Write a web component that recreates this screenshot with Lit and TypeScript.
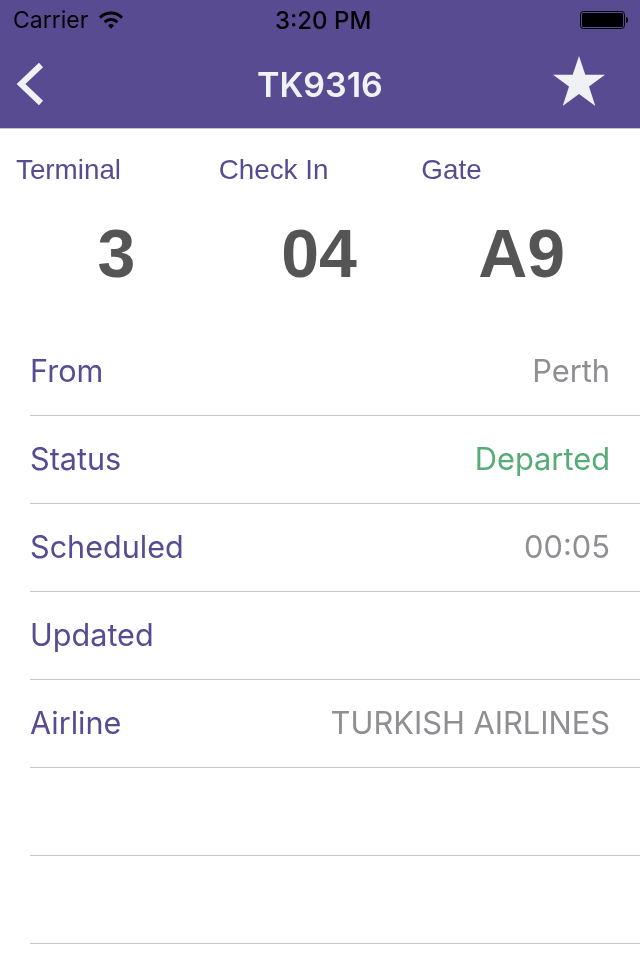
import { html, css, LitElement } from "lit";
import { customElement } from "lit/decorators.js";

const stats = [
  { label: "Terminal", value: "3" },
  { label: "Check In", value: "04" },
  { label: "Gate", value: "A9" },
];

const rows = [
  { label: "From", value: "Perth", cls: "" },
  { label: "Status", value: "Departed", cls: "ok" },
  { label: "Scheduled", value: "00:05", cls: "" },
  { label: "Updated", value: "", cls: "" },
  { label: "Airline", value: "TURKISH AIRLINES", cls: "" },
  { label: "", value: "", cls: "" },
  { label: "", value: "", cls: "" },
];

@customElement("app-root")
export class AppRoot extends LitElement {
  static styles = css`
    :host {
      display: block;
      width: 640px;
      height: 960px;
      overflow: hidden;
      background: #fff;
      font-family: Inter, "Liberation Sans", sans-serif;
    }
    .top {
      background: #584b91;
      height: 129px;
      border-bottom: 1px solid #c4c4c8;
      box-sizing: border-box;
    }
    .status {
      height: 40px;
      display: grid;
      grid-template-columns: 1fr auto 1fr;
      align-items: center;
      padding: 0 12px 0 13px;
      color: #000;
      font-size: 23px;
    }
    .carrier {
      display: flex;
      align-items: center;
      gap: 10px;
      will-change: transform;
    }
    .time {
      font-size: 24px;
      font-weight: 500;
      margin-left: 5px;
      will-change: transform;
    }
    .battery {
      justify-self: end;
      display: flex;
      align-items: center;
    }
    .nav {
      height: 88px;
      display: grid;
      grid-template-columns: 1fr auto 1fr;
      align-items: center;
      padding: 0 35px 0 16px;
      color: #eff1f5;
    }
    .back {
      display: block;
      margin-top: -1px;
    }
    .title {
      font-size: 34px;
      font-weight: 600;
      margin-left: 19px;
      will-change: transform;
    }
    .star {
      display: block;
      justify-self: end;
      margin-top: -6px;
    }
    .stats {
      display: grid;
      grid-template-columns: repeat(3, 1fr);
      padding: 25px 16px 0;
      height: 199px;
      box-sizing: border-box;
      will-change: transform;
    }
    .label {
      font-family: "Liberation Sans", Arial, sans-serif;
      font-size: 27.8px;
      line-height: 32px;
      color: #584b91;
    }
    .value {
      font-family: "Liberation Sans", Arial, sans-serif;
      font-weight: 700;
      font-size: 68px;
      line-height: 76px;
      margin-top: 29px;
      padding-right: 2px;
      text-align: center;
      color: #555;
    }
    .list {
      padding-left: 30px;
      will-change: transform;
    }
    .row {
      height: 88px;
      box-sizing: border-box;
      border-bottom: 1px solid #c8c8cc;
      display: flex;
      align-items: center;
      justify-content: space-between;
      padding: 0 30px 2px 0;
      font-size: 30.6px;
      color: #584b91;
    }
    .row span:last-child {
      font-size: 30.8px;
      color: #8e8e93;
    }
    .row span.ok {
      color: #56ab76;
    }
  `;

  render() {
    return html`
      <header class="top">
        <div class="status">
          <div class="carrier">
            Carrier
            <svg width="26" height="20" viewBox="0 0 26 20">
              <path d="M1 6.500a17 17 0 0 1 24 0l-2 2.200a14 14 0 0 0-20 0z" />
              <path d="M5.600 11a10.500 10.500 0 0 1 14.800 0l-2 2.200a7.500 7.500 0 0 0-10.800 0z" />
              <path d="M10 15.400a4.300 4.300 0 0 1 6 0l-3 3.400z" />
            </svg>
          </div>
          <div class="time">3:20 PM</div>
          <div class="battery">
            <svg width="48" height="20" viewBox="0 0 48 20">
              <rect x="0.500" y="1.500" width="44" height="17" rx="3" fill="none" stroke="#000" />
              <rect x="2" y="3" width="41" height="14" rx="1.500" />
              <path d="M46 7c1.500 0 2 1.200 2 3s-.5 3-2 3z" />
            </svg>
          </div>
        </div>
        <div class="nav">
          <svg class="back" width="30" height="44" viewBox="0 0 30 44">
            <path d="M25 3 5 22l20 19" fill="none" stroke="#eff1f5" stroke-width="6" />
          </svg>
          <div class="title">TK9316</div>
          <svg class="star" width="52" height="50" viewBox="0 0 52 50">
            <path d="M26 0l6.300 18.800H52L36 30.500 42.300 50 26 37.900 9.700 50 16 30.500 0 18.800h19.700z" fill="#eff1f5" />
          </svg>
        </div>
      </header>
      <section class="stats">
        ${stats.map(
          (s) => html`<div>
            <div class="label">${s.label}</div>
            <div class="value">${s.value}</div>
          </div>`
        )}
      </section>
      <section class="list">
        ${rows.map(
          (r) => html`<div class="row">
            <span>${r.label}</span>
            <span class=${r.cls}>${r.value}</span>
          </div>`
        )}
      </section>
    `;
  }
}
